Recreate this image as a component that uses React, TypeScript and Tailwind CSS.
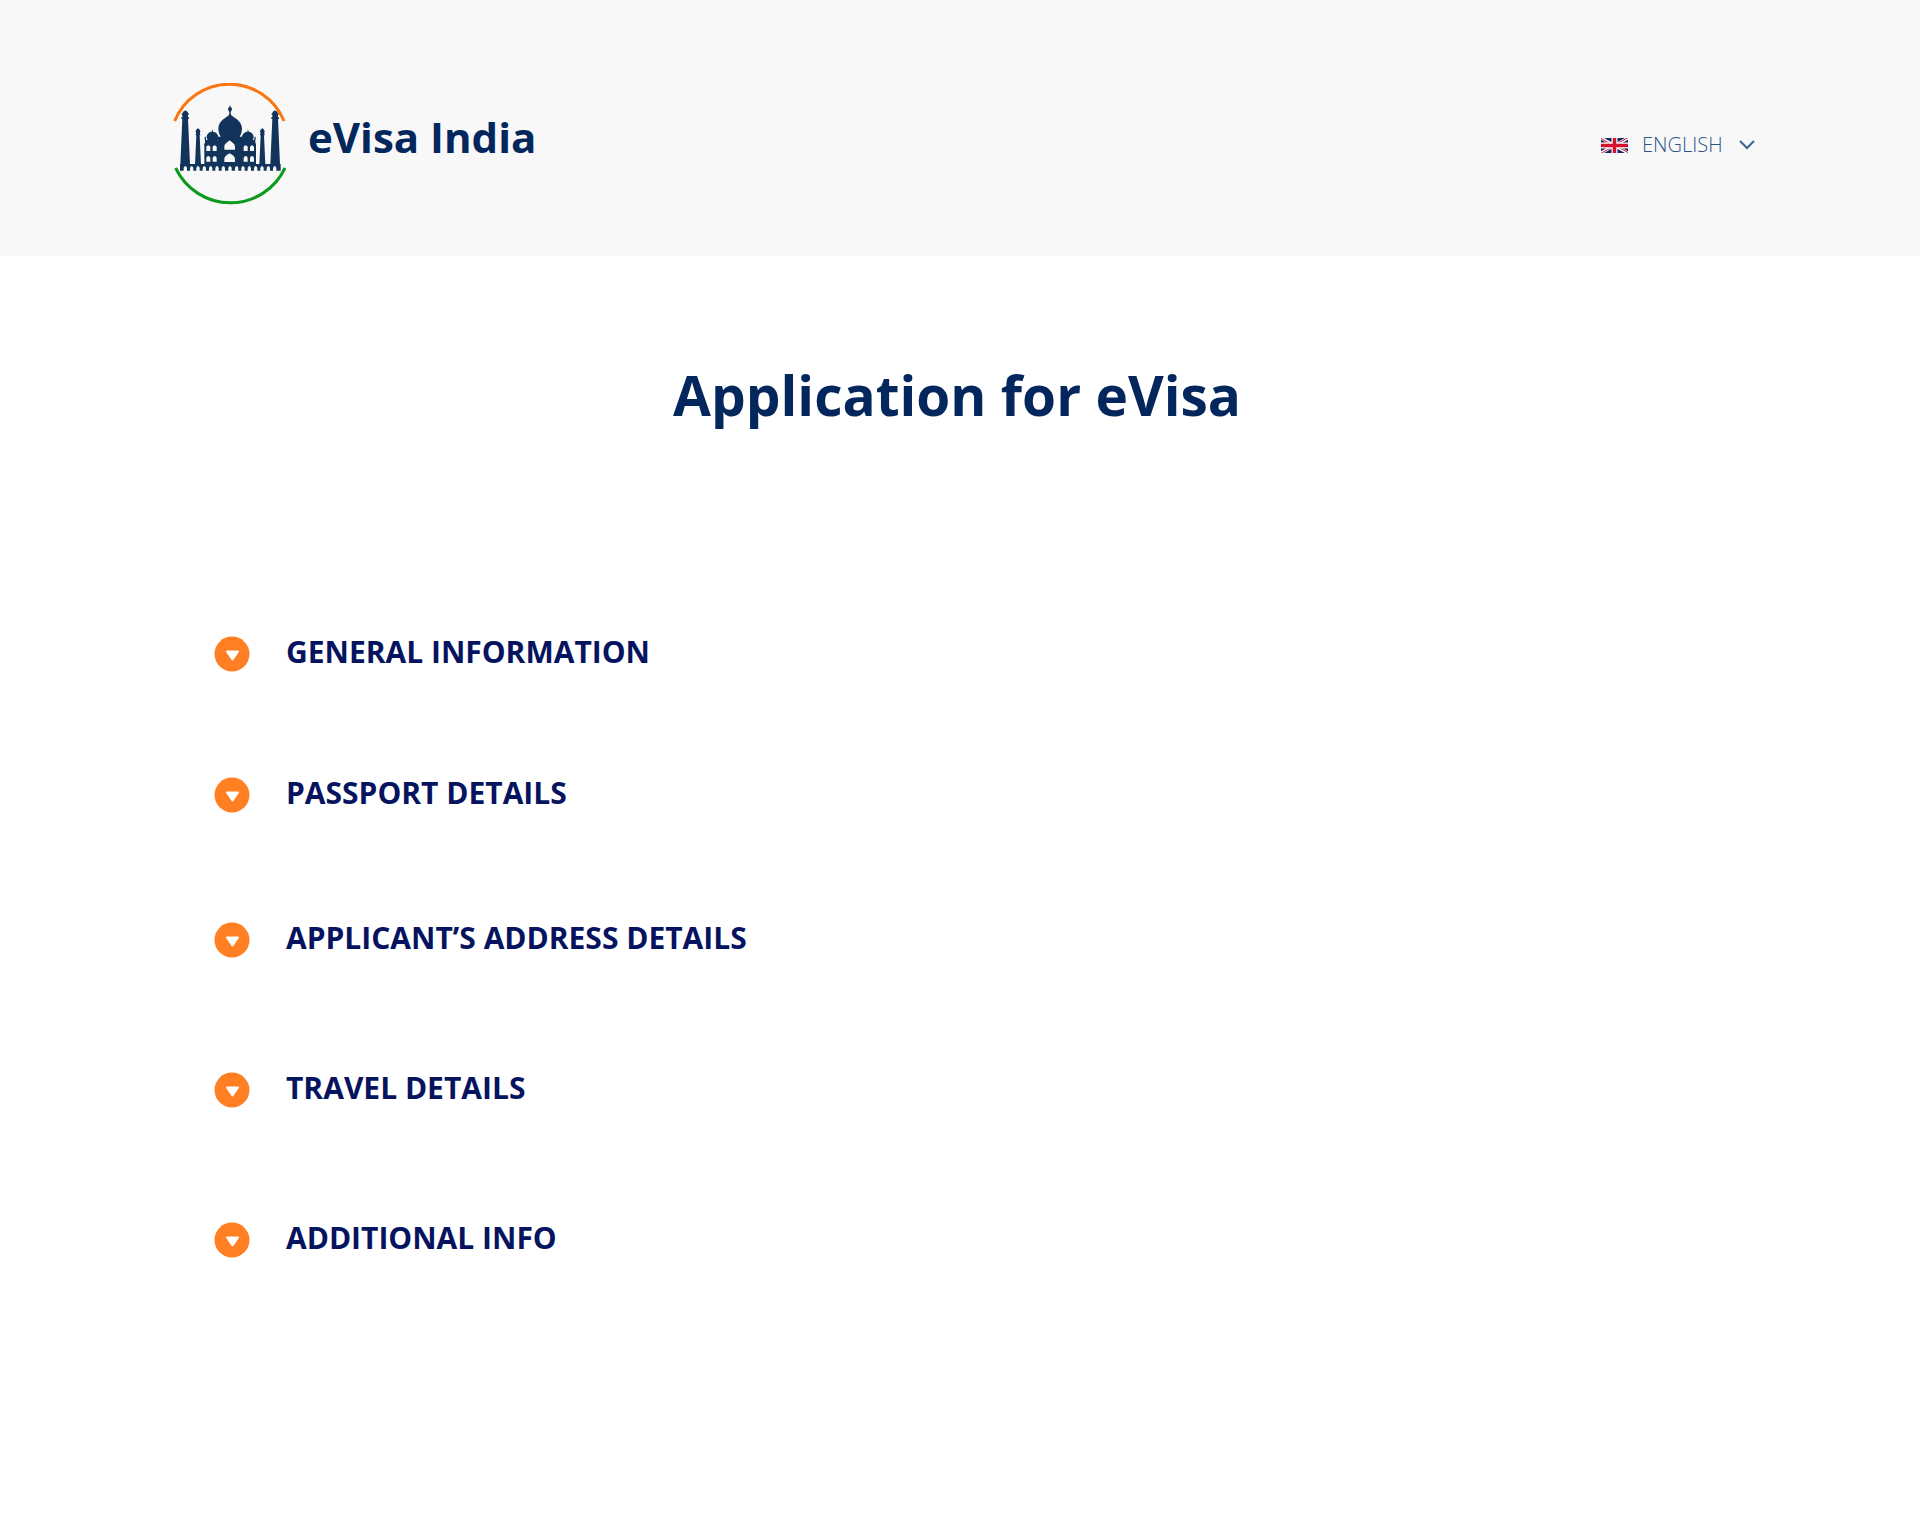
import { useState } from "react";

type SectionType = {
    title: string;
    spacing: string;
}

const sections: SectionType[] = [
    { title: "GENERAL INFORMATION", spacing: "" },
    { title: "PASSPORT DETAILS", spacing: "mt-[101px]" },
    { title: "APPLICANT’S ADDRESS DETAILS", spacing: "mt-[105px]" },
    { title: "TRAVEL DETAILS", spacing: "mt-[110px]" },
    { title: "ADDITIONAL INFO", spacing: "mt-[110px]" },
];

const Minarets = () => (
    <>
        <path d="M61 105l2 3c4 1 6 3 6 7h2v4h-2v8h3v5h-3l1 22 5 114H46l5-114 1-22h-3v-5h3v-8h-2v-4h3c0-4 2-6 6-7z" />
        <path d="M99 158l2 4c3 1 4 3 4 6h1v3h-1v7h1v3h-2l4 88H90l4-88h-2v-3h1v-7h-1v-3h1c0-3 1-5 4-6z" />
    </>
);

const Wing = () => (
    <>
        {/* small dome with its finial */}
        <path d="M142 163l2 7c9 1 16 8 16 17 0 4-1 7-3 10h7v72h-46v-62h2v-12h-1v-6l2-6 2 6v6h5c-2-3-3-5-3-8 0-9 6-16 15-17z" />
        <path d="M118 205h47v5h-47z" />
    </>
);

const Logo = () => (
    <svg className="h-[122px] w-[114px]" viewBox="24 24 342 366" role="img" aria-label="Taj Mahal">
        <path d="M29 138A177 177 0 0 1 357 138" fill="none" stroke="#fc7410" strokeWidth="9" />
        <path d="M32 279A181 181 0 0 0 360 279" fill="none" stroke="#0a9a1c" strokeWidth="9" />
        <g fill="#12335a">
            <Minarets />
            <Wing />
            <g transform="matrix(-1 0 0 1 391 0)">
                <Minarets />
                <Wing />
            </g>
            {/* main dome */}
            <path d="M195 90l2 6c5 2 5 10 1 13l-1 4 1 6c5 8 32 15 33 41 0 10-3 19-7 25h10v86h-77v-86h10c-4-6-7-15-7-25 1-26 28-33 32-41l1-6-1-4c-4-3-4-11 1-13z" />
            <path d="M45 267h302v20H45z" />
        </g>
        <g fill="#f8f8f8">
            <path d="M194 196c5 6 16 9 16 19v9h-32v-9c0-10 11-13 16-19z" />
            <path d="M194 235c6 4 16 8 16 18v8h-32v-8c0-10 10-14 16-18z" />
            {[130, 149, 242, 261].map((x) => (
                <g key={x} transform={`translate(${x} 0)`}>
                    <path d="M-6 228v-11q0-4 6-6 6 2 6 6v11z" />
                    <path d="M-6 260v-11q0-4 6-6 6 2 6 6v11z" />
                </g>
            ))}
            {/* arches along the terrace */}
            {[61, 80, 99, 118, 137, 156, 175, 195, 215, 234, 253, 272, 291, 310, 329].map((x) => (
                <path key={x} transform={`translate(${x} 0)`} d="M-5 288v-9q1-5 5-6 4 1 5 6v9z" />
            ))}
        </g>
    </svg>
);

const Flag = () => (
    <svg className="h-[15px] w-[27px]" viewBox="0 0 54 30" role="img" aria-label="Language">
        <path fill="#18255f" d="M0 0h54v30H0z" />
        <path stroke="#fff" strokeWidth="6" d="M0 0l54 30M54 0L0 30" />
        <path stroke="#d3122e" strokeWidth="2" d="M0 1l27 15M54 29L27 14M53 0L27 14M1 30l26-14" />
        <path stroke="#fff" strokeWidth="12" d="M27 0v30M0 15h54" />
        <path stroke="#d3122e" strokeWidth="7" d="M27 0v30M0 15h54" />
    </svg>
);

const LanguageSelect = () => (
    <div className="relative flex items-center">
        <label htmlFor="language">
            <Flag />
        </label>
        <select
            id="language"
            className="w-[127px] cursor-pointer appearance-none bg-transparent pl-[14px] text-xl font-light text-[#2f5488] outline-none"
        >
            <option>ENGLISH</option>
        </select>
        <svg className="pointer-events-none absolute right-0 h-[10px] w-4" viewBox="0 0 16 10" fill="none" aria-hidden="true">
            <path d="M1 1l7 7 7-7" stroke="#3f6496" strokeWidth="2" />
        </svg>
    </div>
);

const Section = ({ title, spacing }: SectionType) => {
    const [open, setOpen] = useState(false);

    return (
        <li className={spacing}>
            <h2>
                <button
                    type="button"
                    aria-expanded={open}
                    onClick={() => setOpen(!open)}
                    className="flex cursor-pointer items-center gap-9 text-3xl leading-10 font-bold text-[#06145f]"
                >
                    <svg className="mt-1 size-9" viewBox="0 0 36 36" aria-hidden="true">
                        <circle cx="18" cy="18" r="17.5" fill="#ff7f22" />
                        <path d="M13 15.500h11l-5.500 8z" fill="#fff" stroke="#fff" strokeWidth="2" strokeLinejoin="round" />
                    </svg>
                    {title}
                </button>
            </h2>
        </li>
    );
}

const App = () => {
    return <>
        <div className="min-h-screen bg-white font-['Open_Sans',sans-serif]">
            <header className="flex items-start justify-between bg-[#f8f8f8] pt-[83px] pr-[165px] pb-[51px] pl-[173px]">
                <a href="#" className="flex items-center gap-[21px]">
                    <Logo />
                    <span className="pb-[14px] text-[42px] leading-[56px] font-bold text-[#03265c]">eVisa India</span>
                </a>
                <div className="pt-12">
                    <LanguageSelect />
                </div>
            </header>
            <main>
                <h1 className="pt-[101px] pr-[6px] text-center text-[55px] leading-[76px] font-bold text-[#03265c]">
                    Application for eVisa
                </h1>
                <ul className="pt-[199px] pl-[214px]">
                    {sections.map((section) => (
                        <Section key={section.title} {...section} />
                    ))}
                </ul>
            </main>
        </div>
    </>
}
export default App;
